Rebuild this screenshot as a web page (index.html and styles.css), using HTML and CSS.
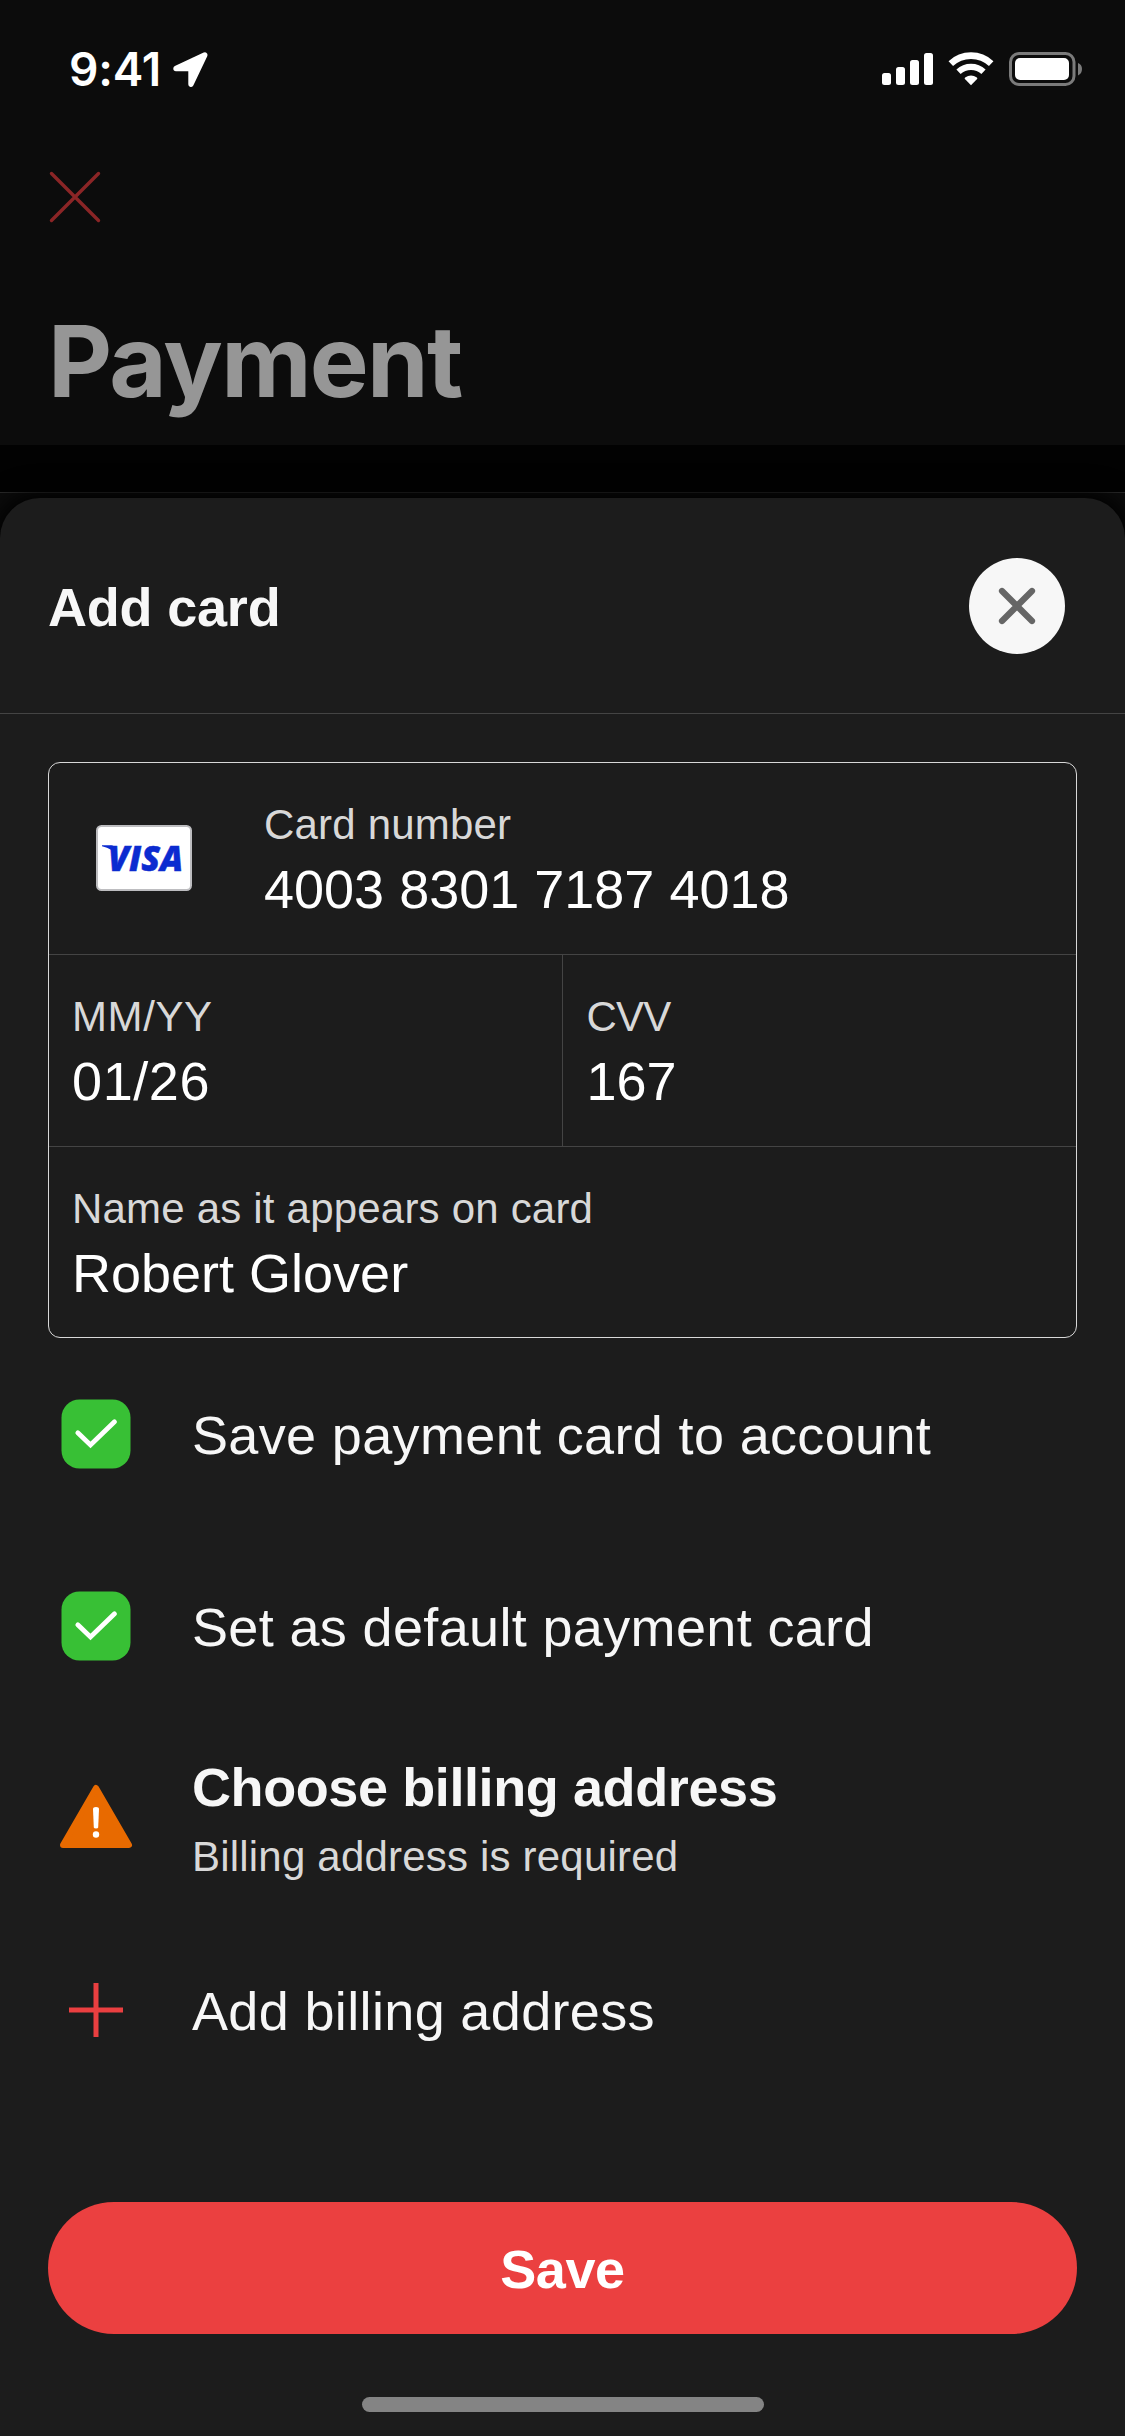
FILE: index.html
```html
<!DOCTYPE html>
<html lang="en">
<head>
<meta charset="utf-8">
<title>Add card</title>
<link rel="stylesheet" href="styles.css">
</head>
<body>
<div class="screen">
  <header class="page-head">
    <div class="status">
      <div class="status-left">
        <span class="time">9:41</span>
        <svg class="loc" width="36" height="36" viewBox="0 0 36 36"><path d="M4 17.500 32.800 4 19 33.200V17.500Z" fill="#fff" stroke="#fff" stroke-width="5.400" stroke-linejoin="round"/></svg>
      </div>
      <svg class="status-icons" width="202" height="36" viewBox="0 0 202 36">
        <g fill="#fff">
          <rect x="0" y="22" width="9" height="12" rx="2.500"/>
          <rect x="14" y="16" width="9" height="18" rx="2.500"/>
          <rect x="28" y="9" width="9" height="25" rx="2.500"/>
          <rect x="42" y="2" width="9" height="32" rx="2.500"/>
          <path d="M89 34.300 82.900 28Q82.300 27.200 83.100 26.600 89 22.400 94.900 26.600 95.700 27.200 95.100 28Z"/>
        </g>
        <path d="M76.500 20.800A18.300 18.300 0 0 1 101.500 20.800" fill="none" stroke="#fff" stroke-width="6.200"/>
        <path d="M68.800 12.600A29.500 29.500 0 0 1 109.200 12.600" fill="none" stroke="#fff" stroke-width="6.600"/>
        <rect x="128.500" y="2.500" width="63.500" height="31" rx="8.500" fill="none" stroke="#7b7b7b" stroke-width="3"/>
        <rect x="133" y="7" width="54" height="22" rx="5" fill="#fff"/>
        <path d="M196 12Q200 13.500 200 18T196 24.500Z" fill="#7b7b7b"/>
      </svg>
    </div>
    <svg class="back-x" width="54" height="54" viewBox="0 0 54 54"><path d="M3.500 3.500 50.500 50.500M50.500 3.500 3.500 50.500" stroke="#8b2526" stroke-width="3.400" stroke-linecap="round"/></svg>
    <h1 class="title">Payment</h1>
  </header>
  <div class="band"></div>

  <section class="sheet">
    <div class="sheet-head">
      <h2 class="sheet-title">Add card</h2>
      <button class="close" aria-label="Close"><svg width="44" height="44" viewBox="0 0 44 44"><path d="M7 7 37 37M37 7 7 37" stroke="#666" stroke-width="6.200" stroke-linecap="round"/></svg></button>
    </div>

    <div class="form">
      <div class="row">
        <div class="brand">
          <svg width="96" height="66" viewBox="0 0 96 66">
            <rect x="1" y="1" width="94" height="64" rx="4.500" fill="#fff" stroke="#bdbdc0" stroke-width="2"/>
            <path d="M6 20.300H15Q18.200 20.300 18.800 23.500L20 31Q17 23.500 6 21.300Z" fill="#0b2bd0"/>
            <text class="visa" x="12" y="46" textLength="75" lengthAdjust="spacingAndGlyphs">VISA</text>
          </svg>
        </div>
        <div class="field"><span class="label">Card number</span><span class="value">4003 8301 7187 4018</span></div>
      </div>
      <div class="row split">
        <div class="field"><span class="label date">MM/YY</span><span class="value date">01/26</span></div>
        <div class="field cvv"><span class="label">CVV</span><span class="value">167</span></div>
      </div>
      <div class="row">
        <div class="field"><span class="label">Name as it appears on card</span><span class="value">Robert Glover</span></div>
      </div>
    </div>

    <div class="options">
      <div class="option">
        <svg width="96" height="96" viewBox="0 0 96 96"><rect x="13.500" y="13.500" width="69" height="69" rx="18" fill="#38c035"/><path d="M29.800 46.800 42.500 59 66.500 35.800" fill="none" stroke="#fff" stroke-width="4.800" stroke-linecap="round" stroke-linejoin="miter"/></svg>
        <span class="option-text">Save payment card to account</span>
      </div>
      <div class="option">
        <svg width="96" height="96" viewBox="0 0 96 96"><rect x="13.500" y="13.500" width="69" height="69" rx="18" fill="#38c035"/><path d="M29.800 46.800 42.500 59 66.500 35.800" fill="none" stroke="#fff" stroke-width="4.800" stroke-linecap="round" stroke-linejoin="miter"/></svg>
        <span class="option-text">Set as default payment card</span>
      </div>
      <div class="option">
        <svg width="96" height="96" viewBox="0 0 96 96"><path d="M48 18 81 75H15Z" fill="#e86a00" stroke="#e86a00" stroke-width="6" stroke-linejoin="round"/><path d="M45 39Q45 37 48 37T51 39L50.200 57.500Q50 58.500 48 58.500T45.800 57.500Z" fill="#fff"/><circle cx="48" cy="64.500" r="3.200" fill="#fff"/></svg>
        <div class="option-stack">
          <strong class="option-title">Choose billing address</strong>
          <span class="option-note">Billing address is required</span>
        </div>
      </div>
      <div class="option">
        <svg width="96" height="96" viewBox="0 0 96 96"><path d="M48 21V75M21 48H75" stroke="#ea3f40" stroke-width="5"/></svg>
        <span class="option-text">Add billing address</span>
      </div>
    </div>

    <button class="save">Save</button>
    <div class="home"></div>
  </section>
</div>
</body>
</html>
```

FILE: styles.css
```css
* { box-sizing: border-box; }

body {
  margin: 0;
  background: #0c0c0c;
  font-family: "Liberation Sans", Arial, sans-serif;
}

svg { display: block; flex: none; overflow: visible; }

.screen {
  width: 1125px;
  height: 2436px;
  display: flex;
  flex-direction: column;
  overflow: hidden;
}

.page-head {
  height: 445px;
  flex: none;
  background: #0c0c0c;
}

.status {
  display: flex;
  justify-content: space-between;
  align-items: flex-start;
  padding: 51px 41px 0 69px;
  height: 170px;
}

.status-left { display: flex; align-items: flex-start; }

.time {
  width: 103px;
  font: 600 46px/36px Inter, sans-serif;
  letter-spacing: -0.2px;
  color: #fff;
}

.back-x { margin-left: 48px; }

.title {
  margin: 77px 0 0 48px;
  font: 700 99px/120px Inter, sans-serif;
  letter-spacing: -1.7px;
  color: #969696;
}

.band {
  height: 48px;
  margin-bottom: 5px;
  flex: none;
  background: #020202;
  border-bottom: 1px solid #2a2a2a;
}

.sheet {
  flex: 1;
  display: flex;
  flex-direction: column;
  background: #1c1c1c;
  border-radius: 40px 40px 0 0;
  box-shadow: 0 0 24px 6px #000;
}

.sheet-head {
  height: 216px;
  flex: none;
  display: flex;
  justify-content: space-between;
  align-items: center;
  padding: 0 60px 0 48px;
  border-bottom: 1px solid #444;
}

.sheet-title {
  margin: 2px 0 0;
  font-size: 54px;
  line-height: 64px;
  letter-spacing: -0.2px;
  color: #f7f7f7;
}

.close {
  width: 96px;
  height: 96px;
  display: flex;
  align-items: center;
  justify-content: center;
  padding: 0;
  border: 0;
  border-radius: 50%;
  background: #f7f7f7;
}

.form {
  flex: none;
  height: 576px;
  margin: 48px 48px 0;
  border: 1px solid #d8d8d8;
  border-radius: 12px;
}

.row { display: flex; height: 192px; border-bottom: 1px solid #444; }
.row:last-child { height: 190px; border-bottom: 0; }

.brand { width: 192px; padding: 62px 0 0 47px; }

.visa {
  font: italic 800 35px "Open Sans", sans-serif;
  fill: #0b2bd0;
  stroke: #0b2bd0;
  stroke-width: 0.5px;
}

.field {
  display: flex;
  flex-direction: column;
  gap: 7px;
  padding: 37px 23px 0;
}

.split .field { flex: 1; }
.split .cvv { padding-left: 24px; border-left: 1px solid #444; }

.label {
  font-size: 42px;
  line-height: 50px;
  letter-spacing: 0.2px;
  color: #d8d8d8;
}

.value {
  font-size: 54px;
  line-height: 64px;
  color: #fff;
}

.date { letter-spacing: 0.6px; }
.cvv .label { letter-spacing: -0.8px; }

.options { padding: 0 48px; }

.option {
  height: 192px;
  display: flex;
  align-items: center;
  gap: 48px;
}

.option-text {
  padding-top: 2px;
  font-size: 54px;
  line-height: 64px;
  letter-spacing: 0.35px;
  color: #f7f7f7;
}

.option-stack {
  display: flex;
  flex-direction: column;
  gap: 13px;
}

.option-title {
  font-size: 54px;
  line-height: 64px;
  letter-spacing: -0.4px;
  color: #f7f7f7;
}

.option-note {
  font-size: 42px;
  line-height: 50px;
  letter-spacing: 0.2px;
  color: #d8d8d8;
}

.save {
  flex: none;
  height: 132px;
  margin: 96px 48px 0;
  padding: 1px 0 0;
  border: 0;
  border-radius: 66px;
  background: #eb4040;
  color: #fff;
  font: 700 54px/64px "Liberation Sans", Arial, sans-serif;
  letter-spacing: -0.4px;
}

.home {
  width: 402px;
  height: 15px;
  margin: 63px auto 0;
  border-radius: 8px;
  background: #848484;
}
```
